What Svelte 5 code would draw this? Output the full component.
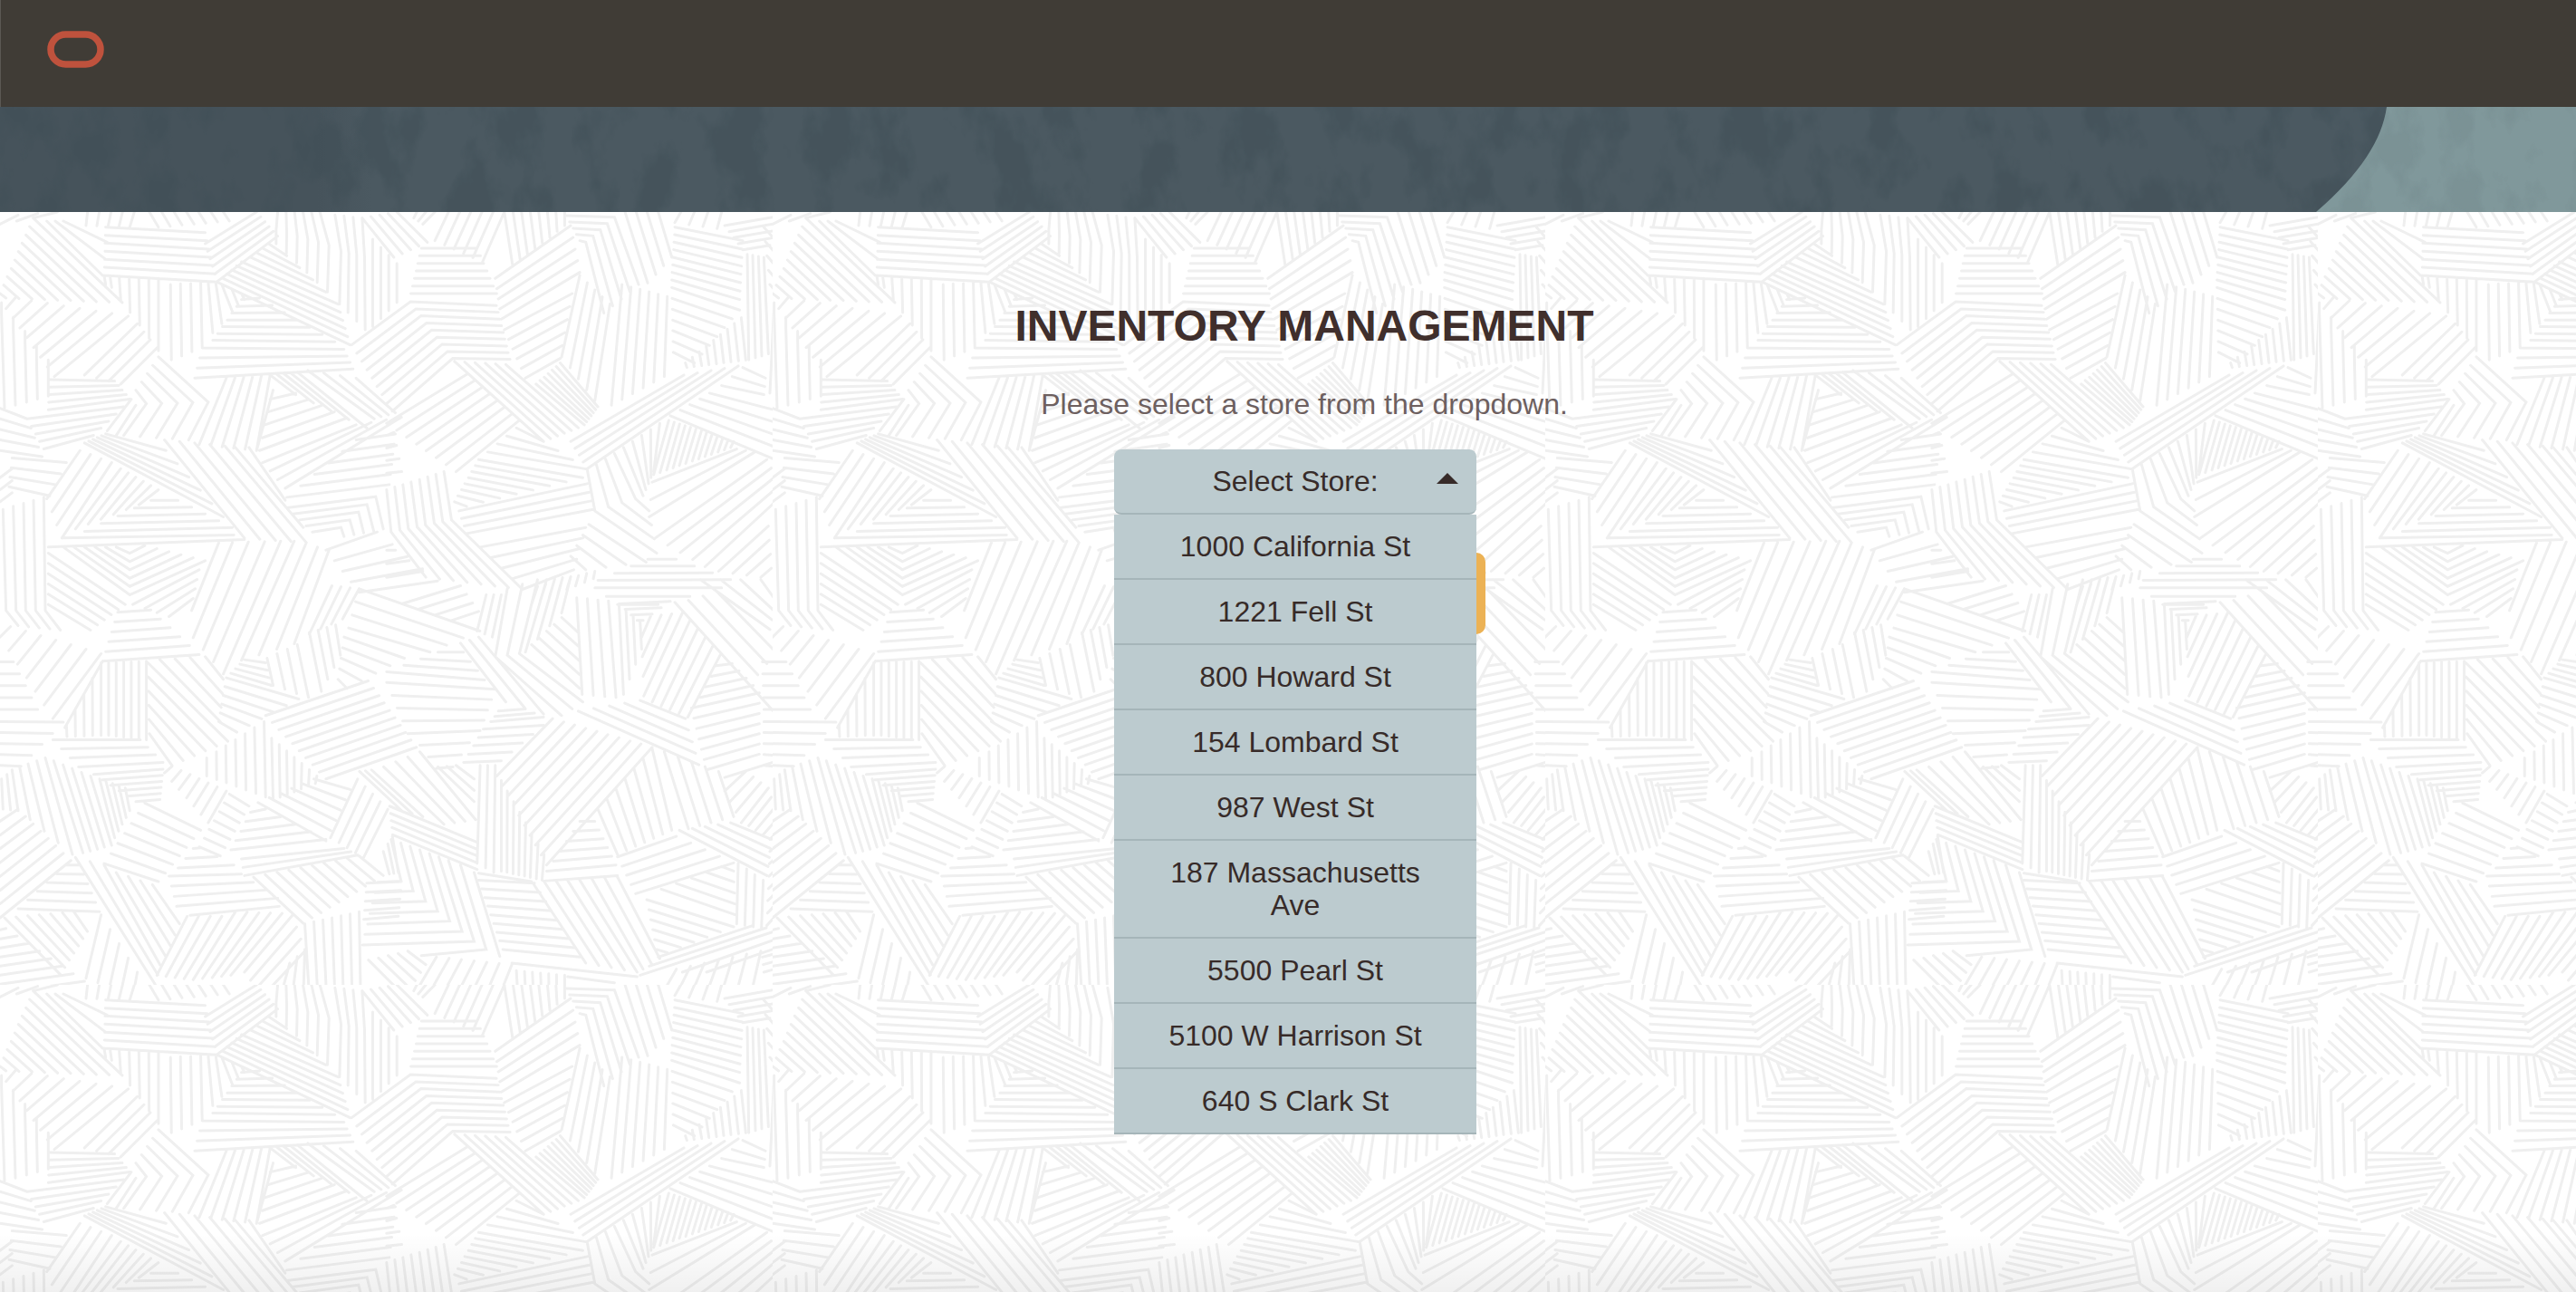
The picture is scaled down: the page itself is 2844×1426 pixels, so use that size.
<script>
  const stores = [
    '1000 California St',
    '1221 Fell St',
    '800 Howard St',
    '154 Lombard St',
    '987 West St',
    '187 Massachusetts Ave',
    '5500 Pearl St',
    '5100 W Harrison St',
    '640 S Clark St',
  ];

  let selected = $state('');

  // Hatching for the page background. Each entry is "count; first line; last line":
  // the lines in between are interpolated. A single line has a count of 1.
  const hatches = [
    {
      x: 0,
      y: 0,
      rows: `10;110,20 405,300;0,270 20,285
3;210,30 355,100;155,30 340,210
3;110,20 190,0;0,40 60,10
8;50,285 20,320;425,345 180,545
4;455,370 280,540;520,450 400,570
5;5,300 5,340 15,650;160,490 160,520 160,610
5;290,0 285,45;445,0 430,50
7;495,0 525,50;740,0 760,30
7;350,50 680,68;345,210 720,232
6;680,105 850,0;720,230 920,80
6;720,232 1160,440;800,165 1120,305
4;830,150 1080,265;890,105 950,145
6;920,0 915,60 915,105;1060,0 1090,110 1085,265
4;1110,10 1130,130 1125,305;1200,20 1208,150 1210,390
4;1235,90 1235,380;1315,170 1315,300
5;1200,20 1305,150;1315,0 1416,100
2;345,210 350,240;365,215 370,250
5;395,215 400,290;525,220 525,460
4;565,240 568,490;665,235 670,450
2;690,235 705,400;715,235 735,370
3;735,240 770,330;800,270 810,290
4;645,550 1170,520;670,450 1140,455
7;705,425 1110,430;800,290 860,285
9;1165,440 1360,297 1645,310;1300,660 1500,485 1690,488
6;750,550 660,770;895,540 850,790
5;525,480 690,630 625,755;450,590 485,635 410,740
2;435,620 355,725;450,640 385,740
5;165,555 380,560;160,655 430,620
5;90,685 410,645;145,785 310,740
5;0,650 90,685;0,790 140,810
4;40,815 220,830;30,910 165,940
3;0,880 40,850;0,960 40,930
6;350,735 550,790;280,765 740,1010
5;545,755 810,1080;745,775 1015,1095
2;780,780 1005,1045;825,780 945,955
4;265,790 155,950;370,830 205,1080
6;400,850 250,1050;525,920 460,970
2;160,1110 810,1085;205,1080 775,1070
5;280,1058 770,1045;500,955 590,955
5;10,985 20,1320 60,1370;145,945 150,1320 200,1385
6;160,1300 300,1385;160,1130 415,1300
6;210,1110 430,1268 680,1155;385,1110 430,1130 480,1105
4;440,1300 660,1185;560,1340 640,1280
1;725,1095 635,1320
4;770,1095 640,1410;930,1090 740,1530
4;975,1090 800,1485;1090,1120 975,1430
5;895,540 980,605;985,530 1215,715
4;1020,525 1240,685;1180,550 1310,665
5;895,620 980,600;860,790 1150,682
4;870,830 1180,705;945,915 1330,680
1;905,590 850,790
6;1180,755 1310,735;950,945 1290,903
5;950,980 1245,943 1270,1050;1035,1060 1130,1045 1140,1075
5;1080,1120 1250,1060;1190,1260 1450,1222`,
    },
    {
      x: 1281,
      y: 0,
      rows: `7;115,120 300,120;80,270 365,270
4;0,740 25,730;0,865 50,860
8;0,920 15,1060 130,1210;190,860 215,1020 450,1250
6;205,0 160,95;390,0 318,165
3;100,0 90,20;160,0 120,40
8;390,0 418,180;590,0 590,45
5;360,220 610,45;380,355 640,200
6;390,390 615,270;460,550 575,485
5;595,12 755,17 835,240;640,95 660,100 720,335
4;790,0 865,235;900,0 945,150
5;640,210 580,480;740,305 690,625
6;780,240 745,640;930,280 920,545
8;955,50 1180,95;945,225 1170,290
7;945,250 1170,325;950,465 1020,500
4;1195,140 1200,490;1250,150 1265,470
9;990,500 995,515;1175,350 1190,490
1;1285,290 1270,600
4;975,0 955,35;1110,0 1095,55
5;1120,45 1320,10;1180,125 1270,110
5;1250,50 1320,130;1270,240 1300,275
6;225,495 520,760;395,505 635,715
7;495,570 655,705;575,500 700,645
8;0,700 270,535;230,860 440,690
4;430,715 520,760;335,795 665,852
8;305,820 650,880;225,960 265,975
5;610,760 985,540;665,850 1165,510
3;1180,515 1255,550;1110,575 1250,605
5;1070,600 1320,665;940,675 1310,830
13;935,690 885,870;1150,760 1140,780
4;665,855 690,990 895,1130;755,800 825,950 870,990
5;785,780 850,940;905,700 885,860
3;880,895 1160,785;870,1010 1220,795
5;890,1080 1260,820;1055,1175 1320,930
4;1100,1190 1265,1040;1240,1210 1275,1180
4;240,990 665,900;265,1065 685,985
5;310,1110 660,1045;450,1250 620,1185
4;670,1035 860,1160;610,1140 660,1185
4;865,1150 960,1150;700,1220 1140,1218
3;690,1245 1110,1245;765,1300 900,1300
8;500,1240 480,1300;690,1190 685,1215
3;0,1120 30,1120;0,1210 120,1190`,
    },
    {
      x: 0,
      y: 1278,
      rows: `6;390,48 500,40;340,210 660,188
7;0,130 35,95;175,400 335,185
5;0,212 45,212;0,370 125,370
5;0,410 210,412;0,555 70,558
1;340,210 215,430
5;220,420 222,460;335,215 335,455
6;360,215 360,455;485,210 485,470
6;495,450 570,555;490,215 755,475
4;530,205 730,410;680,195 740,270
4;175,470 465,470;260,560 540,545
6;310,585 540,568;450,675 530,668
4;65,560 100,735;150,530 240,850
5;178,540 275,845;300,590 370,820
5;330,600 380,795;415,630 430,705
3;5,600 10,700;40,570 60,705
8;0,740 60,700;0,1060 235,870
6;220,885 265,885;60,1030 330,1040
7;545,580 570,558;690,745 750,640
7;685,530 685,590;875,410 880,660
7;900,465 905,670;1050,590 1045,615
4;810,205 880,215;765,250 900,290
6;750,265 990,335;725,410 785,445
4;885,200 905,290;985,155 1022,330
4;1025,115 1065,310;1112,90 1128,190
4;1025,120 1100,-40;1135,70 1190,-30
4;1190,-30 1590,110;1155,100 1425,180
5;1140,130 1340,200;1120,270 1150,300
10;880,390 1220,275;1080,600 1380,495
6;1040,600 1160,635;855,678 1080,805
5;1185,600 1095,795;1285,700 1205,860
7;760,650 825,690;660,825 730,855
5;830,710 880,700;765,835 1080,800
3;800,865 1140,830;810,920 1185,852
3;640,830 665,828;590,895 775,885
4;560,922 800,915;585,1022 920,995
1;630,1052 925,1022
7;480,680 665,770;345,880 525,940
3;250,860 515,1282;345,885 530,1215
4;385,910 550,1190;505,950 595,1080
7;15,1060 200,1248;245,1040 290,1105
8;0,1100 20,1095;0,1310 280,1270
5;335,1050 285,1260;455,1240 440,1320
4;620,1055 520,1250;735,1055 610,1262
5;780,1040 640,1265;935,1045 765,1250
4;970,1050 810,1240;1010,1170 870,1320
10;840,925 1005,1078;1190,855 1270,920
7;1010,1080 1025,1320;1190,1040 1195,1320
3;960,1210 930,1320;1010,1165 1005,1320
5;1205,1065 1320,1055;1215,945 1330,940
3;1300,790 1320,910;1270,840 1290,915`,
    },
    {
      x: 1281,
      y: 1278,
      rows: `3;330,-10 300,110;380,-10 350,130
3;400,-30 360,195 580,390;500,-60 440,185 650,345
4;530,-60 460,180;610,-70 580,50
3;245,150 395,345;305,130 520,385
5;480,155 640,300;580,65 635,115
4;50,20 245,-40;215,75 305,45
7;15,800 48,938 -30,942;205,870 290,1138 -80,1150
1;245,885 330,1165 115,1185
1;290,910 375,1188
5;-60,1200 60,1320;70,1170 130,1215
7;165,1190 100,1300;415,1215 385,1290
4;170,180 255,180;0,245 325,272
5;0,280 360,303;70,450 310,440
3;110,488 275,480;165,565 220,560
3;370,375 460,368;345,410 520,395
5;320,435 520,422;255,545 380,540
4;110,510 295,735;-10,560 190,750
3;-50,570 120,725;-90,575 50,705
3;230,555 290,600;170,560 290,675
5;10,690 300,810;20,785 300,900
3;310,555 300,880;360,555 355,910
8;380,605 380,905;522,850 515,935
1;305,912 480,940
10;365,590 550,400;530,885 880,495
4;630,0 648,320;735,10 760,330
4;770,20 785,320;840,80 845,170
4;770,20 940,12;830,75 850,75
4;875,60 845,130;980,50 852,325
5;1005,75 880,345;1105,190 998,395
4;1092,225 1145,218;1040,330 1215,290
7;1010,365 1235,315;1060,570 1235,518
5;1245,212 1281,212;1250,370 1281,370
5;1250,410 1281,410;1250,555 1281,558
1;955,15 1290,385
3;1000,8 1230,255;1095,-20 1290,180
4;1040,-60 1270,105;1240,-60 1290,10
5;635,375 1035,553;840,340 990,400
7;700,700 765,850;880,500 945,770
5;920,510 1000,765;1100,575 1150,725
6;640,740 690,740;530,905 760,885
1;520,938 765,920
5;765,858 960,790;825,980 1150,878
5;970,770 1260,920;1140,745 1275,800
1;1120,595 1280,545
4;1120,640 1190,575;1175,745 1265,630
4;1200,755 1275,660;1270,800 1320,750
7;1270,840 1320,800;1260,1085 1320,1020
4;1165,880 1160,1080;1248,935 1242,1095
5;1110,890 1150,905;910,965 1155,1050
6;862,1000 1150,1090;895,1165 930,1175
5;485,945 660,1210;640,935 830,1240
3;680,930 850,1230;765,925 905,1195
9;305,935 490,945;385,1165 640,1190
1;415,1210 830,1255
7;430,1235 435,1320;590,1250 590,1320
3;600,1255 755,1275;600,1320 755,1320
3;900,1190 1215,1085;840,1250 1300,1100
2;980,1240 1320,1120;1060,1240 1320,1150
7;960,1230 920,1300;1240,1170 1215,1280
3;1245,1190 1320,1170;1250,1240 1320,1220`,
    },
  ];

  const points = (text) => text.split(' ').map((pair) => pair.split(',').map(Number));

  function hatchPath({ x, y, rows }) {
    let d = '';
    for (const row of rows.split('\n')) {
      const [count, first, last] = row.trim().split(';');
      const n = Number(count);
      const a = points(first);
      const b = points(last ?? first);
      for (let i = 0; i < n; i++) {
        const t = n > 1 ? i / (n - 1) : 0;
        d += a
          .map(([ax, ay], k) => {
            const px = Math.round(x + ax + (b[k][0] - ax) * t);
            const py = Math.round(y + ay + (b[k][1] - ay) * t);
            return `${k ? 'L' : 'M'}${px} ${py}`;
          })
          .join('');
      }
    }
    return d;
  }

  const hatching = hatches.map(hatchPath).join('');
</script>

<div class="page">
  <header>
    <a class="logo" href="/" aria-label="Home">
      <svg width="64" height="42" viewBox="0 0 64 42" fill="none">
        <rect x="4" y="5" width="55" height="33" rx="16.5" stroke="#bf523d" stroke-width="7.5" />
      </svg>
    </a>
  </header>

  <div class="banner">
    <svg class="texture" aria-hidden="true">
      <filter id="mottle" x="0" y="0" width="100%" height="100%" color-interpolation-filters="sRGB">
        <feTurbulence type="fractalNoise" baseFrequency="0.02 0.012" numOctaves="5" seed="7" />
        <feColorMatrix values="0 0 0 0 0.25  0 0 0 0 0.31  0 0 0 0 0.34  6 0 0 0 -2.9" />
      </filter>
      <rect width="100%" height="100%" filter="url(#mottle)" opacity="0.5" />
    </svg>
    <svg class="curve" width="300" height="116" viewBox="0 0 300 116" aria-hidden="true">
      <path d="M91 0C86 36 62 74 13 116H300V0Z" fill="#80989b" />
      <clipPath id="shape"><path d="M91 0C86 36 62 74 13 116H300V0Z" /></clipPath>
      <g clip-path="url(#shape)">
        <rect width="300" height="116" filter="url(#mottle)" opacity="0.08" />
      </g>
    </svg>
  </div>

  <main>
    <svg class="hatching" aria-hidden="true">
      <pattern id="hatch" width="853" height="853" patternUnits="userSpaceOnUse" viewBox="0 0 2560 2560">
        <path d={hatching} fill="none" stroke="#efefef" stroke-width="9" stroke-linecap="round" />
      </pattern>
      <rect width="100%" height="100%" fill="url(#hatch)" />
    </svg>
    <div class="fade"></div>

    <div class="content">
      <h1>INVENTORY MANAGEMENT</h1>
      <label for="store">Please select a store from the dropdown.</label>
      <div class="dropdown">
        <select id="store" bind:value={selected}>
          <option value="">Select Store:</option>
          {#each stores as store}
            <option value={store}>{store}</option>
          {/each}
        </select>
        <svg class="caret" width="24" height="12" viewBox="0 0 24 12" aria-hidden="true">
          <path d="M0 12L12 0L24 12Z" fill="#372b29" />
        </svg>
        <ul>
          {#each stores as store}
            <li><button type="button" onclick={() => (selected = store)}>{store}</button></li>
          {/each}
        </ul>
      </div>
      <button class="submit" type="button" aria-label="Submit"></button>
    </div>
  </main>
</div>

<style>
  :global(body) {
    margin: 0;
  }

  .page {
    display: flex;
    flex-direction: column;
    min-height: 100vh;
    background: #fff;
    color: #372b29;
    font-family: 'Liberation Sans', Arial, sans-serif;
    font-size: 32px;
    line-height: 36px;
  }

  header {
    display: flex;
    box-sizing: border-box;
    height: 118px;
    padding: 33px 52px;
    background: #403c36;
    box-shadow: inset 1px 0 #5b5853;
  }

  .logo {
    display: block;
    height: 42px;
  }

  .logo svg {
    display: block;
  }

  .banner {
    display: flex;
    justify-content: flex-end;
    position: relative;
    height: 116px;
    background: linear-gradient(90deg, #46535b 350px, #4b5961 410px);
  }

  .texture {
    position: absolute;
    inset: 0;
    width: 100%;
    height: 100%;
  }

  .curve {
    position: relative;
  }

  main {
    position: relative;
    flex: 1;
  }

  .hatching {
    position: absolute;
    inset: 0;
    width: 100%;
    height: 100%;
  }

  .fade {
    position: absolute;
    inset: auto 0 0;
    height: 64px;
    background: linear-gradient(transparent, rgb(0 0 0 / 6%));
  }

  .content {
    position: relative;
    display: flex;
    flex-direction: column;
    align-items: center;
    padding: 98px 0 64px 36px;
  }

  h1 {
    margin: 0 0 40px;
    color: #402f2c;
    font-size: 48px;
    line-height: 56px;
  }

  label {
    margin-bottom: 32px;
    color: #6d605f;
  }

  .dropdown {
    position: relative;
    z-index: 1;
    width: 400px;
    margin-right: 20px;
  }

  select {
    display: block;
    box-sizing: border-box;
    width: 100%;
    height: 72px;
    padding: 0 32px;
    appearance: none;
    border: 0;
    border-bottom: 2px solid #a5b5b9;
    border-radius: 8px;
    background: #bccbcf;
    color: inherit;
    font: inherit;
    text-align: center;
    text-align-last: center;
  }

  .caret {
    position: absolute;
    top: 26px;
    right: 20px;
    pointer-events: none;
  }

  ul {
    position: absolute;
    top: 100%;
    left: 0;
    width: 100%;
    margin: 0;
    padding: 0;
    list-style: none;
  }

  li button {
    display: block;
    width: 100%;
    padding: 17px 32px;
    border: 0;
    border-bottom: 2px solid #a5b5b9;
    background: #bccbcf;
    color: inherit;
    font: inherit;
    text-align: center;
  }

  .submit {
    width: 400px;
    height: 90px;
    margin-top: 42px;
    border: 0;
    border-radius: 10px;
    background: #ecb255;
  }
</style>
